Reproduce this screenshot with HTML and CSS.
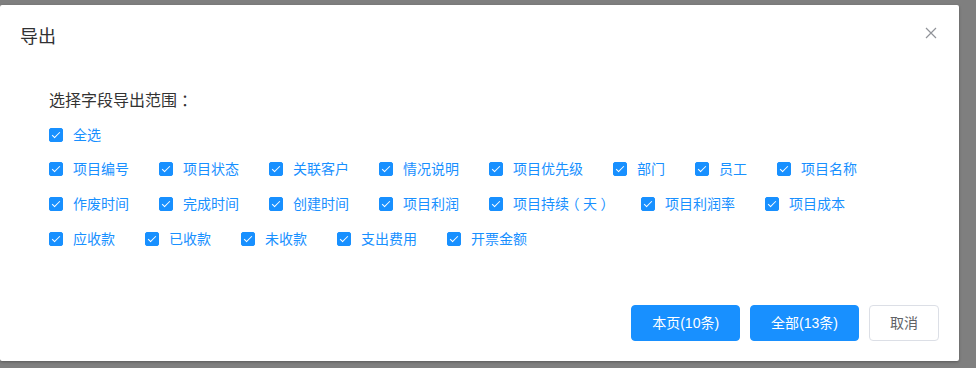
FILE: index.html
```html
<!DOCTYPE html>
<html lang="zh-CN">
<head>
<meta charset="utf-8">
<title>导出</title>
<link rel="stylesheet" href="styles.css">
</head>
<body>
<div class="dialog">
  <div class="dialog-header">
    <span class="dialog-title">导出</span>
    <button class="dialog-close" aria-label="关闭">
      <svg width="16" height="16" viewBox="0 0 16 16"><path d="M3 3L13 13M13 3L3 13" stroke="#909399" stroke-width="1.2" fill="none"/></svg>
    </button>
  </div>
  <div class="dialog-body">
    <div class="field-title">选择字段导出范围<span class="punct">：</span></div>
    <div class="cb-row cb-all">
      <label class="cb"><span class="cb-box"></span><span class="cb-label">全选</span></label>
    </div>
    <div class="cb-row">
      <label class="cb"><span class="cb-box"></span><span class="cb-label">项目编号</span></label>
      <label class="cb"><span class="cb-box"></span><span class="cb-label">项目状态</span></label>
      <label class="cb"><span class="cb-box"></span><span class="cb-label">关联客户</span></label>
      <label class="cb"><span class="cb-box"></span><span class="cb-label">情况说明</span></label>
      <label class="cb"><span class="cb-box"></span><span class="cb-label">项目优先级</span></label>
      <label class="cb"><span class="cb-box"></span><span class="cb-label">部门</span></label>
      <label class="cb"><span class="cb-box"></span><span class="cb-label">员工</span></label>
      <label class="cb"><span class="cb-box"></span><span class="cb-label">项目名称</span></label>
    </div>
    <div class="cb-row">
      <label class="cb"><span class="cb-box"></span><span class="cb-label">作废时间</span></label>
      <label class="cb"><span class="cb-box"></span><span class="cb-label">完成时间</span></label>
      <label class="cb"><span class="cb-box"></span><span class="cb-label">创建时间</span></label>
      <label class="cb"><span class="cb-box"></span><span class="cb-label">项目利润</span></label>
      <label class="cb"><span class="cb-box"></span><span class="cb-label">项目持续<span class="punct">（</span>天<span class="punct">）</span></span></label>
      <label class="cb"><span class="cb-box"></span><span class="cb-label">项目利润率</span></label>
      <label class="cb"><span class="cb-box"></span><span class="cb-label">项目成本</span></label>
    </div>
    <div class="cb-row">
      <label class="cb"><span class="cb-box"></span><span class="cb-label">应收款</span></label>
      <label class="cb"><span class="cb-box"></span><span class="cb-label">已收款</span></label>
      <label class="cb"><span class="cb-box"></span><span class="cb-label">未收款</span></label>
      <label class="cb"><span class="cb-box"></span><span class="cb-label">支出费用</span></label>
      <label class="cb"><span class="cb-box"></span><span class="cb-label">开票金额</span></label>
    </div>
  </div>
  <div class="dialog-footer">
    <button class="btn btn-primary">本页(10条)</button>
    <button class="btn btn-primary">全部(13条)</button>
    <button class="btn btn-default">取消</button>
  </div>
</div>
</body>
</html>
```

FILE: styles.css
```css
* { box-sizing: border-box; }
html, body { margin: 0; padding: 0; }
body {
  width: 976px;
  height: 368px;
  overflow: hidden;
  background: #7f7f7f;
  font-family: "Liberation Sans", "Noto Sans CJK SC", sans-serif;
  padding-top: 5px;
}
.dialog {
  position: relative;
  width: 959px;
  background: #fff;
  border-radius: 2px;
  box-shadow: 0 1px 3px rgba(0,0,0,0.3);
}
.dialog-header {
  padding: 20px 20px 10px;
  height: 54px;
}
.dialog-title {
  display: block;
  font-size: 18px;
  line-height: 24px;
  color: #303133;
}
.dialog-close {
  position: absolute;
  top: 20px;
  right: 20px;
  width: 16px;
  height: 16px;
  padding: 0;
  border: 0;
  background: transparent;
  display: flex;
}
.dialog-body {
  padding: 30px 20px 46px 49px;
}
.field-title {
  font-size: 16px;
  line-height: 24px;
  height: 24px;
  color: #333;
}
.punct {
  display: inline-block;
  width: 1em;
  line-height: 1;
  text-align: center;
  font-feature-settings: "halt" 1;
}
.cb-row {
  display: flex;
  height: 20px;
  margin-top: 15px;
}
.cb-all { margin-top: 12px; }
.cb-row.cb-all + .cb-row { margin-top: 14px; }
.cb {
  display: flex;
  align-items: center;
  margin-right: 30px;
  cursor: pointer;
}
.cb-box {
  position: relative;
  width: 14px;
  height: 14px;
  background: #1890ff;
  border: 1px solid #1890ff;
  border-radius: 2px;
  flex: none;
}
.cb-box::after {
  content: "";
  position: absolute;
  left: 4px;
  top: 1px;
  width: 3px;
  height: 7px;
  border: 1px solid #fff;
  border-left: 0;
  border-top: 0;
  transform: rotate(45deg);
}
.cb-label {
  padding-left: 10px;
  font-size: 14px;
  line-height: 20px;
  height: 20px;
  color: #1890ff;
  white-space: nowrap;
}
.dialog-footer {
  display: flex;
  justify-content: flex-end;
  gap: 10px;
  padding: 10px 20px 20px;
}
.btn {
  font-family: "Liberation Sans", "Noto Sans CJK SC", sans-serif;
  font-size: 14px;
  line-height: 14px;
  padding: 10px 20px;
  height: 36px;
  border-radius: 4px;
  border: 1px solid #dcdfe6;
  background: #fff;
  color: #606266;
  margin: 0;
}
.btn-primary {
  background: #1890ff;
  border-color: #1890ff;
  color: #fff;
}
```
